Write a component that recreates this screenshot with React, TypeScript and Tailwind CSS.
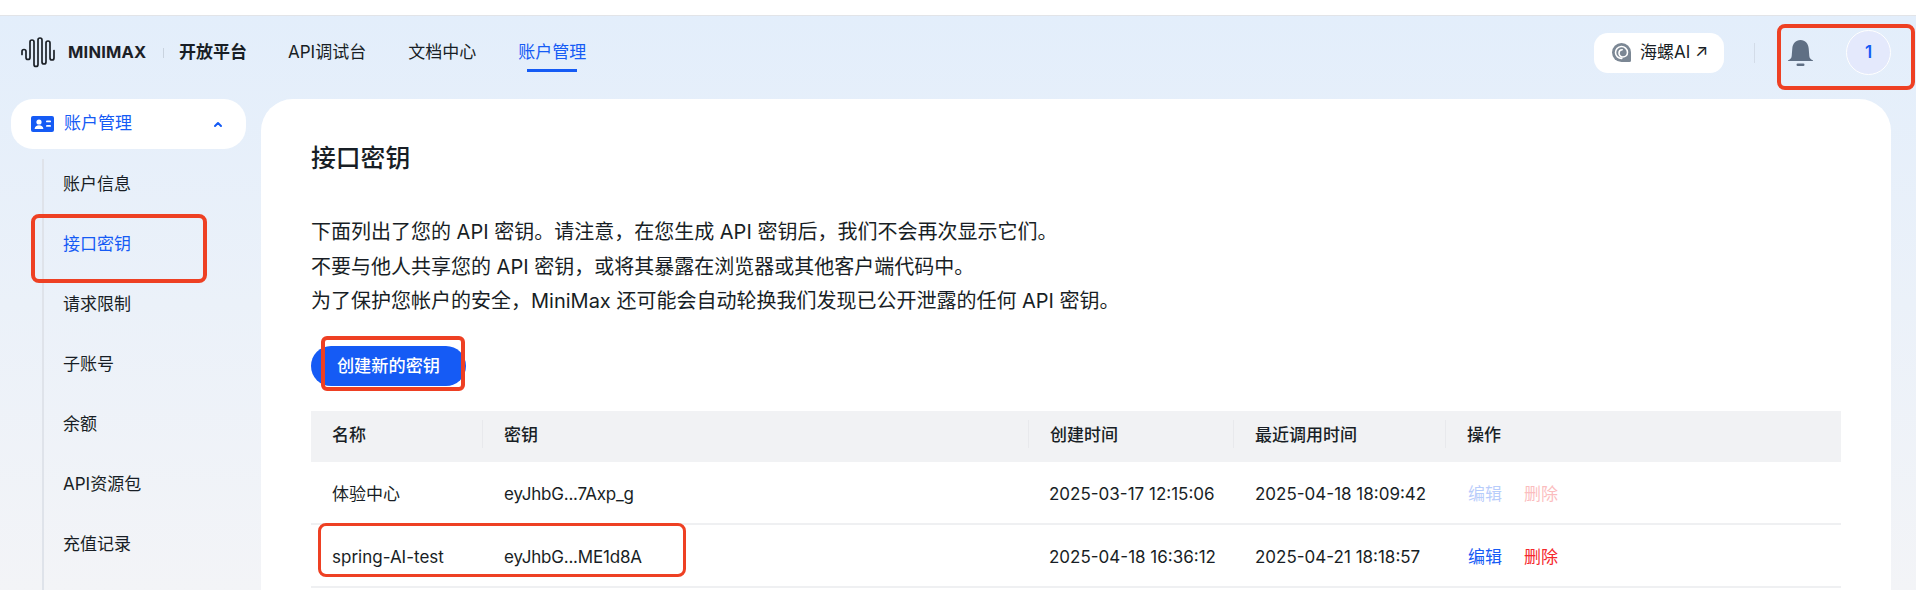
import React from "react";

const FONT = "font-['Inter','Noto_Sans_CJK_SC',sans-serif]";

function Logo() {
  return (
    <svg width="37" height="32" viewBox="0 0 37 32" fill="none" stroke="#1c2127" strokeWidth="1.7" strokeLinecap="round" strokeLinejoin="round">
      <path d="M1 17.500v-3a2 2 0 0 1 4 0v6a2 2 0 0 0 4 0V5a2 2 0 0 1 4 0v22.500a2 2 0 0 0 4 0V3a2 2 0 0 1 4 0v22a2 2 0 0 0 4 0V6a2 2 0 0 1 4 0v15a2 2 0 0 0 4 0v-6.500a2 2 0 0 1 0-1" />
    </svg>
  );
}

function Snail() {
  return (
    <svg width="21" height="21" viewBox="0 0 21 21" fill="none">
      <path d="M10.500 1a9.500 9.500 0 1 0 0 19h8a1.500 1.500 0 0 0 1.500-1.500v-8A9.500 9.500 0 0 0 10.500 1z" fill="#7b8794" />
      <path d="M10.800 16.500a6 6 0 1 1 5.700-6.300c0 3-2.200 4.800-4.700 4.800a3.800 3.800 0 0 1-3.800-3.900c0-2 1.500-3.300 3.200-3.300" fill="none" stroke="#fff" strokeWidth="1.600" strokeLinecap="round" />
    </svg>
  );
}

function Bell() {
  return (
    <svg width="27" height="28" viewBox="0 0 27 28" fill="#5f6f84">
      <path d="M13.500 1C8.600 1 5.600 4.800 5.300 9.500L4.700 17c-.2 2-1.300 3.400-3.400 4.200-.6.3-.5.9.2.9h24c.7 0 .8-.6.2-.9-2.100-.8-3.200-2.200-3.400-4.200l-.6-7.500C21.400 4.800 18.400 1 13.500 1z" />
      <rect x="9.500" y="24.500" width="8" height="2.400" rx="1.200" />
    </svg>
  );
}

function IdCard() {
  return (
    <svg width="23" height="16" viewBox="0 0 23 16">
      <rect width="23" height="16" rx="2" fill="#155bf5" />
      <circle cx="8" cy="6" r="2.600" fill="#fff" />
      <path d="M3.600 13c.3-2.600 2-3.800 4.400-3.800s4.100 1.200 4.400 3.800z" fill="#fff" />
      <rect x="15" y="4.500" width="5" height="1.800" rx=".9" fill="#fff" />
      <rect x="15" y="9" width="5" height="1.800" rx=".9" fill="#fff" />
    </svg>
  );
}

const menu = ["账户信息", "接口密钥", "请求限制", "子账号", "余额", "API资源包", "充值记录"];

const rows = [
  { name: "体验中心", key: "eyJhbG...7Axp_g", created: "2025-03-17 12:15:06", used: "2025-04-18 18:09:42", faded: true },
  { name: "spring-AI-test", key: "eyJhbG...ME1d8A", created: "2025-04-18 16:36:12", used: "2025-04-21 18:18:57", faded: false },
];

const headers = [
  { label: "名称", w: "w-[172px]" },
  { label: "密钥", w: "w-[546px]" },
  { label: "创建时间", w: "w-[205px]" },
  { label: "最近调用时间", w: "w-[212px]" },
  { label: "操作", w: "flex-1" },
];

export default function App() {
  return (
    <div className={`${FONT} relative flex h-[590px] w-full flex-col overflow-hidden bg-white text-[17px] text-[#181e25]`}>
      <div className="h-[16px] shrink-0 border-b border-[#e2e4e8] bg-white" />
      <div className="flex min-h-0 flex-1 flex-col bg-gradient-to-b from-[#e3eefb] to-[#f3f4f7]">
        <header className="flex h-[83px] shrink-0 items-center pb-[10px] pl-[21px]">
          <Logo />
          <span className="ml-[10px] w-[95px] text-[16.500px] font-bold tracking-[0.2px] text-[#1c2127]">MINIMAX</span>
          <span className="h-[10px] w-px bg-[#c9d3df]" />
          <span className="ml-[15px] font-semibold">开放平台</span>
          <nav className="ml-[41px] flex gap-[42px]">
            <span>API调试台</span>
            <span>文档中心</span>
            <span className="relative text-[#155bf5]">
              账户管理
              <span className="absolute left-[9px] top-[29px] h-[3px] w-[50px] bg-[#155bf5]" />
            </span>
          </nav>
          <div className="ml-auto flex items-center pr-[25px]">
            <div className="flex h-[40px] w-[130px] items-center gap-[8px] rounded-[14px] bg-white pl-[17px] text-[17px]">
              <Snail />
              <span className="whitespace-nowrap">海螺AI ↗</span>
            </div>
            <span className="ml-[30px] h-[20px] w-px bg-[#d3dce8]" />
            <span className="ml-[32px] flex"><Bell /></span>
            <span className="ml-[32px] flex h-[45px] w-[45px] items-center justify-center rounded-full border border-white bg-[#e4e9fc] font-semibold text-[#155bf5]">1</span>
          </div>
        </header>
        <div className="flex min-h-0 flex-1">
          <aside className="w-[261px] shrink-0 pl-[11px]">
            <div className="flex h-[50px] w-[235px] items-center rounded-[22px] bg-white pl-[20px] text-[#155bf5]">
              <IdCard />
              <span className="ml-[10px]">账户管理</span>
              <svg className="ml-[81px]" width="10" height="7" viewBox="0 0 10 7" fill="none" stroke="#155bf5" strokeWidth="2" strokeLinecap="round" strokeLinejoin="round"><path d="M2 5l3-3 3 3" /></svg>
            </div>
            <ul className="ml-[31px] mt-[10px] flow-root h-[500px] border-l-2 border-[#dfe3ea] pl-[19px]">
              {menu.map((m, i) => (
                <li key={m} className={`flex h-[60px] items-center first:mt-[-4px] ${i === 1 ? "text-[#155bf5]" : ""}`}>{m}</li>
              ))}
            </ul>
          </aside>
          <main className="h-[600px] w-[1630px] shrink-0 rounded-t-[32px] bg-white pl-[50px] pr-[50px]">
            <h1 className="flex h-[116px] items-start pt-[43px] text-[24.800px] font-medium leading-[32px]">接口密钥</h1>
            <div className="text-[20px] leading-[34.500px]">
              <p>下面列出了您的 API 密钥。请注意，在您生成 API 密钥后，我们不会再次显示它们。</p>
              <p>不要与他人共享您的 API 密钥，或将其暴露在浏览器或其他客户端代码中。</p>
              <p>为了保护您帐户的安全，MiniMax 还可能会自动轮换我们发现已公开泄露的任何 API 密钥。</p>
            </div>
            <button className="mt-[27px] block h-[40px] w-[155px] rounded-full bg-[#155bf5] text-[17.200px] font-medium text-white">创建新的密钥</button>
            <div className="mt-[25px]">
              <div className="flex h-[51px] items-center bg-[#f1f2f4]">
                {headers.map((h, i) => (
                  <div key={h.label} className={`${h.w} relative pl-[21px] font-medium`}>
                    {h.label}
                    {i < 4 && <span className="absolute right-0 top-[-3px] h-[28px] w-px bg-[#e8e9ec]" />}
                  </div>
                ))}
              </div>
              {rows.map((r) => (
                <div key={r.name} className="flex h-[63px] items-center border-b-2 border-[#eff0f2] pt-[5px]">
                  <div className="w-[172px] pl-[21px]">{r.name}</div>
                  <div className="w-[546px] pl-[21px] tracking-[-0.2px]">{r.key}</div>
                  <div className="w-[205px] pl-[20px]">{r.created}</div>
                  <div className="w-[212px] pl-[21px]">{r.used}</div>
                  <div className={`flex flex-1 gap-[22px] pl-[22px] ${r.faded ? "opacity-30" : ""}`}>
                    <span className="text-[#155bf5]">编辑</span>
                    <span className="text-[#f5282d]">删除</span>
                  </div>
                </div>
              ))}
            </div>
          </main>
        </div>
      </div>
      <div className="pointer-events-none absolute left-[31px] top-[214px] h-[69px] w-[176px] rounded-[8px] border-[4px] border-[#ee4023]" />
      <div className="pointer-events-none absolute left-[321px] top-[336px] h-[55px] w-[144px] rounded-[6px] border-[4px] border-[#ee4023]" />
      <div className="pointer-events-none absolute left-[318px] top-[523px] h-[54px] w-[368px] rounded-[8px] border-[3px] border-[#ee4023]" />
      <div className="pointer-events-none absolute left-[1777px] top-[24px] h-[66px] w-[138px] rounded-[8px] border-[4px] border-[#ee4023]" />
    </div>
  );
}
